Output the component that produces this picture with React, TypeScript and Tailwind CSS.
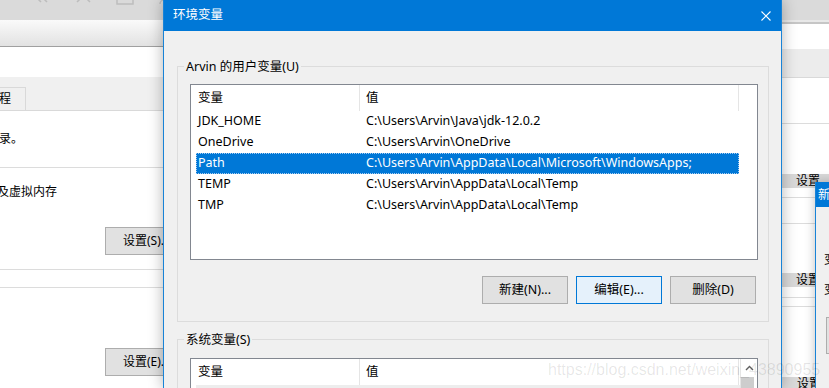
const userVars = [
  ["JDK_HOME", "C:\\Users\\Arvin\\Java\\jdk-12.0.2"],
  ["OneDrive", "C:\\Users\\Arvin\\OneDrive"],
  ["Path", "C:\\Users\\Arvin\\AppData\\Local\\Microsoft\\WindowsApps;"],
  ["TEMP", "C:\\Users\\Arvin\\AppData\\Local\\Temp"],
  ["TMP", "C:\\Users\\Arvin\\AppData\\Local\\Temp"],
];

function WinButton({ label, focused }: { label: string; focused?: boolean }) {
  return (
    <div
      className={
        focused
          ? "w-[86px] h-[28px] border border-[#0078d7] bg-[#e5f1fb] flex items-center justify-center"
          : "w-[86px] h-[28px] border border-[#adadad] bg-[#e1e1e1] flex items-center justify-center"
      }
    >
      {label}
    </div>
  );
}

function ListHeader() {
  return (
    <div className="flex h-[26px] bg-white">
      <div className="w-[169px] pl-[7px] flex items-center border-r border-[#e5e5e5]">变量</div>
      <div className="w-[379px] pl-[6px] flex items-center border-r border-[#e5e5e5]">值</div>
    </div>
  );
}

function LeftWindow() {
  return (
    <div className="absolute left-0 top-0 w-[170px] h-full flex flex-col bg-white text-[12px]">
      <div className="h-[20px] bg-[#dadada]">
        <svg width="170" height="20" viewBox="0 0 170 20" fill="none" stroke="#bdbdbd" strokeWidth="1.5">
          <path d="M38 -1 L41 2 M44 -1 L47 2" />
          <path d="M80 -1 L77 2 M87 -1 L90 2" />
          <rect x="117" y="-5" width="16" height="9" />
          <path d="M160 4 A4 4 0 0 1 164 0" />
        </svg>
      </div>
      <div className="h-[27px] bg-gradient-to-b from-[#fafafa] to-[#e2e2e2] border-b border-[#a0a0a0]" />
      <div className="h-[30px] bg-white" />
      <div className="h-[34px] bg-[#f0f0f0] border-b border-[#d9d9d9] flex items-end">
        <div className="w-[26px] h-[23px] border-r border-t border-[#d9d9d9] bg-[#f0f0f0] flex items-center justify-end pr-[14px]">
          程
        </div>
      </div>
      <div className="h-[56px] flex items-center -ml-[1px]">录。</div>
      <div className="h-px bg-[#dcdcdc]" />
      <div className="h-[48px] flex items-center -ml-[3px]">及虚拟内存</div>
      <div className="h-[11px]" />
      <div className="ml-[105px] h-[28px] border border-[#adadad] bg-[#e1e1e1] flex items-center pl-[17px] whitespace-nowrap">
        设置(S)...
      </div>
      <div className="h-[14px]" />
      <div className="h-px bg-[#dcdcdc]" />
      <div className="h-[17px]" />
      <div className="h-px bg-[#dcdcdc]" />
      <div className="h-[60px]" />
      <div className="ml-[105px] h-[28px] border border-[#adadad] bg-[#e1e1e1] flex items-center pl-[17px] whitespace-nowrap">
        设置(E)...
      </div>
    </div>
  );
}

function RightWindow() {
  return (
    <div className="absolute left-[782px] top-0 w-[47px] h-full flex flex-col bg-white text-[12px]">
      <div className="h-[20px] shrink-0 bg-[#dadada]" />
      <div className="h-[2px] shrink-0 bg-[#e8e8e8]" />
      <div className="h-[2px] shrink-0 bg-[#c6c6c6]" />
      <div className="h-[25px] shrink-0 bg-white" />
      <div className="h-[29px] shrink-0 bg-[#ececec] border-b border-[#d9d9d9]" />
      <div className="h-[46px] shrink-0 border-b border-[#dcdcdc]" />
      <div className="h-[50px] shrink-0" />
      <div className="h-[14px] shrink-0 bg-[#d9d9d9] flex items-center pl-[14px] overflow-hidden whitespace-nowrap">设置</div>
      <div className="h-[10px] shrink-0 border-b border-[#dcdcdc]" />
      <div className="h-[26px] shrink-0 border-b border-[#dcdcdc]" />
      <div className="h-[49px] shrink-0" />
      <div className="h-[14px] shrink-0 bg-[#d9d9d9] flex items-center pl-[14px] overflow-hidden whitespace-nowrap">设置</div>
      <div className="h-[11px] shrink-0 border-b border-[#dcdcdc]" />
      <div className="h-[9px] shrink-0 border-b border-[#dcdcdc]" />
      <div className="h-[70px] shrink-0" />
      <div className="h-[14px] shrink-0 bg-[#d9d9d9] flex items-center pl-[15px] overflow-hidden whitespace-nowrap">设置(T)</div>
    </div>
  );
}

function NewVarDialog() {
  return (
    <div className="absolute left-[815px] top-[182px] w-[40px] h-[206px] border-l border-[#1883d7] bg-[#f0f0f0] shadow-[0_0_10px_rgba(0,0,0,0.25)] flex flex-col text-[12px]">
      <div className="h-[25px] bg-[#0078d7] text-white flex items-center pl-[2px] whitespace-nowrap overflow-hidden">
        新建系统变量
      </div>
      <div className="h-[62px] flex items-end pl-[8px] whitespace-nowrap">变量名(N):</div>
      <div className="h-[30px] flex items-end pl-[8px] whitespace-nowrap">变量值(V):</div>
      <div className="mt-[18px] ml-[10px] h-[37px] border border-[#adadad] bg-[#e1e1e1]" />
    </div>
  );
}

function EnvDialog() {
  return (
    <div className="absolute left-[163px] top-0 w-[619px] h-[388px] border-x border-[#1883d7] bg-[#f0f0f0] shadow-[0_0_14px_rgba(0,0,0,0.3)] flex flex-col">
      <div className="h-[31px] shrink-0 bg-[#0078d7] text-white flex items-center justify-between pl-[9px] pr-[10px]">
        <span>环境变量</span>
        <svg width="10" height="10" viewBox="0 0 10 10" stroke="white" strokeWidth="1.1">
          <path d="M0.5 0.5 L9.5 9.5 M9.5 0.5 L0.5 9.5" />
        </svg>
      </div>
      <div className="pt-[35px] pl-[13px] pr-[12px]">
        <div className="relative border border-[#dcdcdc] pt-[17px] pl-[12px] pr-[10px] pb-[17px]">
          <span className="absolute -top-[9px] left-[6px] px-[2px] leading-[17px] bg-[#f0f0f0]">Arvin 的用户变量(U)</span>
          <div className="h-[176px] border border-[#828790] bg-white">
            <ListHeader />
            <div className="pl-[5px]">
              {userVars.map(([name, value]) => (
                <div
                  key={name}
                  className={
                    name === "Path"
                      ? "w-[543px] h-[21px] flex items-center bg-[#0078d7] text-white border border-dotted border-[#a9cdf0]"
                      : "w-[543px] h-[21px] flex items-center border border-transparent"
                  }
                >
                  <div className="w-[169px] pl-[1px]">{name}</div>
                  <div className="whitespace-nowrap">{value}</div>
                </div>
              ))}
            </div>
          </div>
          <div className="mt-[16px] pr-[2px] flex justify-end gap-[8px]">
            <WinButton label="新建(N)..." />
            <WinButton label="编辑(E)..." focused />
            <WinButton label="删除(D)" />
          </div>
        </div>
        <div className="relative mt-[17px] border-t border-x border-[#dcdcdc] pt-[18px] pl-[12px] pr-[10px] h-[60px]">
          <span className="absolute -top-[9px] left-[6px] px-[2px] leading-[17px] bg-[#f0f0f0]">系统变量(S)</span>
          <div className="h-[60px] border border-[#828790] bg-white flex">
            <div className="flex-1 flex flex-col">
              <ListHeader />
              <div className="ml-[5px] h-[21px] bg-[#ededed]" />
            </div>
            <div className="w-[17px] border-l border-[#e5e5e5] flex flex-col">
              <div className="h-[18px] flex items-center justify-center">
                <svg width="9" height="6" viewBox="0 0 9 6" fill="none" stroke="#606060" strokeWidth="1.4">
                  <path d="M1 5 L4.5 1.5 L8 5" />
                </svg>
              </div>
              <div className="flex-1 mr-[3px] bg-[#cdcdcd]" />
            </div>
          </div>
        </div>
      </div>
    </div>
  );
}

export default function App() {
  return (
    <div className="relative w-[829px] h-[388px] overflow-hidden bg-white font-['Noto_Sans','Noto_Sans_CJK_SC',sans-serif] text-[12.5px] text-black">
      <LeftWindow />
      <RightWindow />
      <NewVarDialog />
      <EnvDialog />
      <div className="absolute left-[548px] top-[358px] font-['Liberation_Sans',sans-serif] text-[16px] text-black/10 whitespace-nowrap">
        https://blog.csdn.net/weixin_43890955
      </div>
    </div>
  );
}
